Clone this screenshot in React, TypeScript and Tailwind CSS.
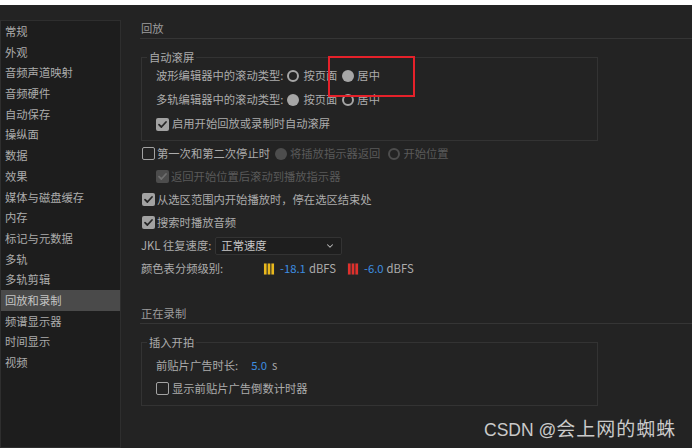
import { ChevronDown } from 'lucide-react'

const navItems = [
    '常规', '外观', '音频声道映射', '音频硬件', '自动保存', '操纵面', '数据', '效果',
    '媒体与磁盘缓存', '内存', '标记与元数据', '多轨', '多轨剪辑', '回放和录制',
    '频谱显示器', '时间显示', '视频',
]

function Check({ checked, disabled }: { checked?: boolean; disabled?: boolean }) {
    if (!checked) {
        return <span className="block w-[13px] h-[13px] shrink-0 rounded-[2px] border-[1.5px] border-[#a3a3a3]" />
    }
    return (
        <span className={`w-[13px] h-[13px] shrink-0 rounded-[2px] flex items-center justify-center ${disabled ? 'bg-[#4c4c4c]' : 'bg-[#a2a2a2]'}`}>
            <svg width="11" height="11" viewBox="0 0 11 11">
                <path d="M2 5.6 L4.4 8 L9 3" fill="none" stroke={disabled ? '#6f6f6f' : '#262626'} strokeWidth="1.8" strokeLinecap="round" strokeLinejoin="round" />
            </svg>
        </span>
    )
}

function Radio({ on, disabled }: { on?: boolean; disabled?: boolean }) {
    if (on) {
        return <span className={`block w-[12px] h-[12px] shrink-0 rounded-full ${disabled ? 'bg-[#4d4d4d]' : 'bg-[#a6a6a6]'}`} />
    }
    return <span className={`block w-[12px] h-[12px] shrink-0 rounded-full border-2 ${disabled ? 'border-[#4d4d4d]' : 'border-[#a6a6a6]'}`} />
}

function Meter({ color }: { color: string }) {
    return (
        <svg width="12" height="12" viewBox="0 0 12 12" className="shrink-0">
            <rect x="0" y="0" width="12" height="12" fill="#2a2a2a" />
            <rect x="1" y="0.5" width="2.6" height="11" fill={color} />
            <rect x="4.7" y="0.5" width="2.6" height="11" fill={color} />
            <rect x="8.4" y="0.5" width="2.6" height="11" fill={color} />
        </svg>
    )
}

export default function App() {
    return (
        <div className="relative w-[692px] h-[448px] overflow-hidden bg-[#232323] font-['Noto_Sans_CJK_SC','Liberation_Sans',sans-serif] text-[11.3px] text-[#acacac]">
            <div className="h-[5px] bg-white" />

            <div className="flex pt-[15px] h-[443px]">
                {/* Sidebar */}
                <aside className="w-[121px] h-full shrink-0 bg-[#1d1d1d] border border-[#2e2e2e] pt-[0.35px]">
                    {navItems.map(item => (
                        <div
                            key={item}
                            className={`h-[20.7px] flex items-center pl-[4px] leading-none ${item === '回放和录制' ? 'bg-[#4a4a4a] text-[#c4c4c4]' : ''}`}
                        >
                            {item}
                        </div>
                    ))}
                </aside>

                {/* Content */}
                <main className="flex-1 ml-[19px]">
                    <div className="h-[19px] flex items-center pl-[1px] border-b border-[#353535] text-[#9c9c9c] leading-none">
                        回放
                    </div>

                    <fieldset className="mt-[11px] ml-[1px] w-[457px] border border-[#333333] pl-[5px] pb-[4px]">
                        <legend className="px-[2px] leading-[14px]">自动滚屏</legend>
                        <div className="pl-[9px]">
                            <div className="h-[24px] flex items-center leading-none">
                                <span>波形编辑器中的滚动类型:</span>
                                <span className="ml-[4px]"><Radio /></span>
                                <span className="ml-[4px]">按页面</span>
                                <span className="ml-[5px]"><Radio on /></span>
                                <span className="ml-[3px]">居中</span>
                            </div>
                            <div className="h-[24px] flex items-center leading-none">
                                <span>多轨编辑器中的滚动类型:</span>
                                <span className="ml-[4px]"><Radio on /></span>
                                <span className="ml-[4px]">按页面</span>
                                <span className="ml-[5px]"><Radio /></span>
                                <span className="ml-[3px]">居中</span>
                            </div>
                            <div className="h-[24px] flex items-center leading-none">
                                <Check checked />
                                <span className="ml-[3px]">启用开始回放或录制时自动滚屏</span>
                            </div>
                        </div>
                    </fieldset>

                    <div className="mt-[1px] pl-[2px] leading-none">
                        <div className="h-[23px] flex items-center">
                            <Check />
                            <span className="ml-[2px]">第一次和第二次停止时</span>
                            <span className="ml-[5px]"><Radio on disabled /></span>
                            <span className="ml-[3px] text-[#5a5a5a]">将插放指示器返回</span>
                            <span className="ml-[8px]"><Radio disabled /></span>
                            <span className="ml-[3px] text-[#5a5a5a]">开始位置</span>
                        </div>
                        <div className="h-[23px] flex items-center pl-[14px]">
                            <Check checked disabled />
                            <span className="ml-[2px] text-[#5a5a5a]">返回开始位置后滚动到播放指示器</span>
                        </div>
                        <div className="h-[23px] flex items-center">
                            <Check checked />
                            <span className="ml-[2px]">从选区范围内开始播放时，停在选区结束处</span>
                        </div>
                        <div className="h-[23px] flex items-center">
                            <Check checked />
                            <span className="ml-[2px]">搜索时播放音频</span>
                        </div>
                        <div className="h-[23px] flex items-center -ml-[1px]">
                            <span className="shrink-0 whitespace-nowrap">JKL 往复速度:</span>
                            <div className="ml-[4px] w-[127px] h-[18px] rounded-[2px] border border-[#333333] bg-[#1e1e1e] flex items-center pl-[5px] pr-[6px] text-[#c8c8c8]">
                                <span className="flex-1">正常速度</span>
                                <ChevronDown className="w-[10px] h-[10px] text-[#bdbdbd]" strokeWidth={2.5} />
                            </div>
                        </div>
                        <div className="h-[23px] flex items-center -ml-[1px]">
                            <span className="w-[122px]">颜色表分频级别:</span>
                            <div className="w-[84px] flex items-center">
                                <Meter color="#e9b81c" />
                                <span className="ml-[5px] text-[#3d8ee0]">-18.1</span>
                                <span className="ml-[3px]">dBFS</span>
                            </div>
                            <Meter color="#e0302c" />
                            <span className="ml-[5px] text-[#3d8ee0]">-6.0</span>
                            <span className="ml-[3px]">dBFS</span>
                        </div>
                    </div>

                    <div className="mt-[25px] h-[19px] flex items-center pl-[1px] border-b border-[#353535] text-[#9c9c9c] leading-none">
                        正在录制
                    </div>

                    <fieldset className="mt-[11px] ml-[1px] w-[457px] border border-[#333333] pl-[5px] pb-[5px]">
                        <legend className="px-[2px] leading-[14px]">插入开拍</legend>
                        <div className="pl-[9px] pt-[5px] leading-none">
                            <div className="h-[23px] flex items-center">
                                <span>前贴片广告时长:</span>
                                <span className="ml-[13px] text-[#3d8ee0]">5.0</span>
                                <span className="ml-[5px]">s</span>
                            </div>
                            <div className="h-[23px] flex items-center">
                                <Check />
                                <span className="ml-[3px]">显示前贴片广告倒数计时器</span>
                            </div>
                        </div>
                    </fieldset>
                </main>
            </div>

            {/* highlight box */}
            <div className="absolute left-[328px] top-[56px] w-[87px] h-[41px] border-2 border-[#e5212a]" />

            {/* watermark */}
            <div className="absolute left-[484px] top-[418px] flex items-baseline whitespace-nowrap text-[#cacaca] leading-none">
                <span className="font-['Liberation_Sans',sans-serif] text-[17.5px]">CSDN @</span>
                <span className="text-[19px] tracking-[1px]">会上网的蜘蛛</span>
            </div>
        </div>
    )
}
